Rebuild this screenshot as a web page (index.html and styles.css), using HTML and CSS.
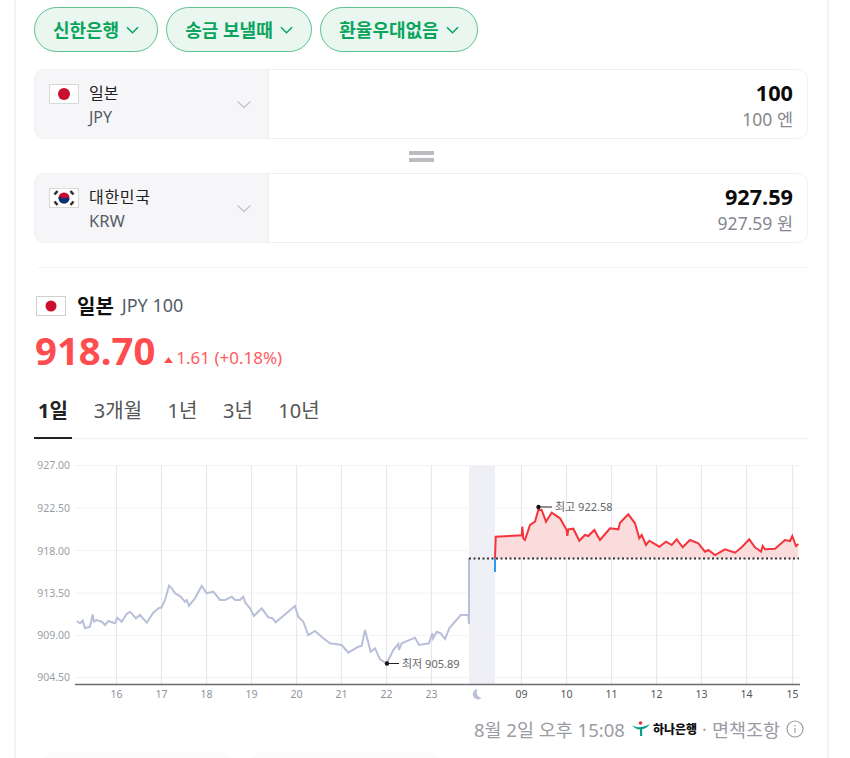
FILE: index.html
```html
<!DOCTYPE html>
<html lang="ko">
<head>
<meta charset="utf-8">
<title>환율</title>
<link rel="stylesheet" href="styles.css">
</head>
<body>
<main class="card">
  <div class="pills">
    <button class="pill pill-a">신한은행<svg class="pill-chev" viewBox="0 0 14 8"><path d="M1 1l6 6 6-6"/></svg></button>
    <button class="pill pill-b">송금 보낼때<svg class="pill-chev" viewBox="0 0 14 8"><path d="M1 1l6 6 6-6"/></svg></button>
    <button class="pill pill-c">환율우대없음<svg class="pill-chev" viewBox="0 0 14 8"><path d="M1 1l6 6 6-6"/></svg></button>
  </div>

  <section class="converter">
    <div class="cur-select">
      <svg class="flag" viewBox="0 0 30 20"><rect x=".5" y=".5" width="29" height="19" fill="#fff" stroke="#d9d9d9"/><circle cx="15" cy="10" r="6" fill="#c8102e"/></svg>
      <div class="cur-names"><span class="cur-name">일본</span><span class="cur-code">JPY</span></div>
      <svg class="cur-chev" viewBox="0 0 16 9"><path d="M1.500 1.500L8 7.500l6.500-6"/></svg>
    </div>
    <div class="cur-value"><strong>100</strong><span>100 엔</span></div>
  </section>

  <div class="swap"><i></i><i></i></div>

  <section class="converter">
    <div class="cur-select">
      <svg class="flag" viewBox="0 0 30 20">
        <rect x=".5" y=".5" width="29" height="19" fill="#fff" stroke="#d9d9d9"/>
        <circle cx="15" cy="10" r="5.500" fill="#c60c30"/>
        <path d="M9.600 9.200a5.500 5.500 0 0 0 10.800 2c-.6-1.600-2.400-2.300-3.900-1.300-1.600 1-2.900.8-3.800-.1-.9-.9-2.400-1.500-3.100-.6z" fill="#003478"/>
        <g stroke="#333" stroke-width="2.600">
          <path d="M5.500 6.500l3-3.500M21.500 3l3 3.500M5.500 13.500l3 3.500M21.500 17l3-3.500"/>
        </g>
      </svg>
      <div class="cur-names"><span class="cur-name cur-name-wide">대한민국</span><span class="cur-code cur-code-wide">KRW</span></div>
      <svg class="cur-chev" viewBox="0 0 16 9"><path d="M1.500 1.500L8 7.500l6.500-6"/></svg>
    </div>
    <div class="cur-value"><strong>927.59</strong><span>927.59 원</span></div>
  </section>

  <hr class="divider">

  <div class="title-row">
    <svg class="flag flag-title" viewBox="0 0 30 20"><rect x=".5" y=".5" width="29" height="19" fill="#fff" stroke="#d0d0d0"/><circle cx="15" cy="10" r="5.500" fill="#c8102e"/></svg>
    <strong class="title-name">일본</strong>
    <span class="title-code">JPY 100</span>
  </div>

  <div class="price-row">
    <span class="price">918.70</span>
    <span class="delta"><svg class="delta-tri" viewBox="0 0 10 7"><path d="M5 0l5 7H0z"/></svg>1.61 (+0.18%)</span>
  </div>

  <nav class="tabs">
    <a class="tab tab-on">1일</a>
    <a class="tab">3개월</a>
    <a class="tab">1년</a>
    <a class="tab">3년</a>
    <a class="tab">10년</a>
  </nav>

  <svg class="chart" viewBox="0 0 774 258" width="774" height="258">
    <g transform="translate(-34 -458)">
      <rect x="469" y="465" width="26" height="219" fill="#eef0f6"/>
      <g class="grid-h">
        <path d="M75 465.500H800M75 508H800M75 550.500H800M75 593H800M75 635.500H800M75 677.500H800"/>
      </g>
      <g class="grid-v">
        <path d="M116.500 465V684M161.500 465V684M206.500 465V684M251.500 465V684M296.500 465V684M341.500 465V684M386.500 465V684M431.500 465V684M521.500 465V684M566.500 465V684M611.500 465V684M656.500 465V684M701.500 465V684M746.500 465V684M792.500 465V684"/>
      </g>
      <path class="area" d="M495 558.500L495.700 536.700L521.700 535.300L522.300 526.700L523.300 538.300L525 540L530 525L535 521.700L538.300 510L541.700 510L546 521.700L551.700 512.700L560 518.300L566.700 530L567.300 536L568.300 529.300L573.300 528.700L579.300 540.700L585 535L588.300 536L594.300 530L600 540L610 528.300L618.300 529.300L620 522.700L628.300 514.300L635 523.300L639.300 538.300L641.700 535L646 545L649.300 540.700L659.300 546.700L666 541.700L671.700 545L676.700 539.300L682.700 547.300L690 540L698.300 543.300L705 551.700L708.300 550L715 555L725 549.300L735 552.700L741.700 547.300L749.300 539.300L755 547.300L761 551.700L762.700 546L765 549.300L775 548.700L785 540L790 541L792.300 536L796 546L798.300 544V558.500Z"/>
      <path class="line-past" d="M76.700 621L80 623.300L82.700 620.700L85 628.300L90 626.700L92.700 614.300L94 621.700L96.700 620L101.700 621.700L105 625L108.300 621L115 623.300L117.300 617.700L121.700 621.700L126.700 614L130 611.700L136 618.300L140 615L146.700 622.700L153.300 612.700L158.300 608.300L161.700 607.300L165 600L169 585.700L171.700 588.300L175 593.300L180 596L185 601.700L186.700 600L189 605.700L195 598.300L201.700 586L206.700 593.300L213.300 591.700L220 600L225 600L231.700 596.700L235 600L240 600L243.300 596.700L245 602.300L250 608.300L254 616L261.700 608.300L268.300 617.300L272.700 618.300L275.700 622.300L295 606L298.300 616.700L303.300 621.700L308.300 635L315 631L323.300 638.300L330 643.300L341.700 645L348.300 652.700L358.300 646.700L361.700 645.700L365 630L370.700 651.700L375 648.300L380 659.300L386.700 663.300L393.300 650L398.300 644L399 650L401.700 643.300L415 637.700L419 645L429 643.300L432.300 633.300L433 638.300L436.700 631.700L440.700 633.300L445 639L449.300 628.300L460.700 615L468.300 615L469 624L469 558"/>
      <path class="line-now" d="M495 558.500L495.700 536.700L521.700 535.300L522.300 526.700L523.300 538.300L525 540L530 525L535 521.700L538.300 510L541.700 510L546 521.700L551.700 512.700L560 518.300L566.700 530L567.300 536L568.300 529.300L573.300 528.700L579.300 540.700L585 535L588.300 536L594.300 530L600 540L610 528.300L618.300 529.300L620 522.700L628.300 514.300L635 523.300L639.300 538.300L641.700 535L646 545L649.300 540.700L659.300 546.700L666 541.700L671.700 545L676.700 539.300L682.700 547.300L690 540L698.300 543.300L705 551.700L708.300 550L715 555L725 549.300L735 552.700L741.700 547.300L749.300 539.300L755 547.300L761 551.700L762.700 546L765 549.300L775 548.700L785 540L790 541L792.300 536L796 546L798.300 544"/>
      <path class="line-blue" d="M495 558.500V572"/>
      <path class="baseline" d="M469 558.500H799"/>
      <path class="axis" d="M75 684.500H800"/>
      <g class="mark">
        <circle cx="538.500" cy="507" r="2.200"/><path d="M538.500 507H552"/>
        <circle cx="387" cy="663.500" r="2.200"/><path d="M387 663.500H399"/>
      </g>
      <g class="mark-text">
        <text x="555" y="511">최고 922.58</text>
        <text x="402" y="667.500">최저 905.89</text>
      </g>
      <g class="y-labels">
        <text x="70" y="469">927.00</text>
        <text x="70" y="512">922.50</text>
        <text x="70" y="554.500">918.00</text>
        <text x="70" y="597">913.50</text>
        <text x="70" y="639">909.00</text>
        <text x="70" y="681">904.50</text>
      </g>
      <g class="x-labels">
        <text x="116.500" y="698">16</text><text x="161.500" y="698">17</text><text x="206.500" y="698">18</text><text x="251.500" y="698">19</text><text x="296.500" y="698">20</text><text x="341.500" y="698">21</text><text x="386.500" y="698">22</text><text x="431.500" y="698">23</text>
        <text class="x-dark" x="521.500" y="698">09</text><text class="x-dark" x="566.500" y="698">10</text><text class="x-dark" x="611.500" y="698">11</text><text class="x-dark" x="656.500" y="698">12</text><text class="x-dark" x="701.500" y="698">13</text><text class="x-dark" x="746.500" y="698">14</text><text class="x-dark" x="792.500" y="698">15</text>
      </g>
      <path class="moon" d="M477.500 689a5.200 5.200 0 1 0 4 9a6 6 0 0 1-4-9z"/>
    </g>
  </svg>

  <footer class="source">
    <span class="stamp">8월 2일 오후 15:08</span>
    <span class="bank">
      <svg class="bank-mark" viewBox="0 0 18 16"><path d="M0 4c4 3 9 3 18-.8c-2.500 3-5.500 4.600-7.800 5V15H8V8.500C4.600 8.300 2 7 0 4z" fill="#0f9d8a"/><circle cx="8.500" cy="2" r="1.800" fill="#e0323c"/></svg>
      <b>하나은행</b>
    </span>
    <span class="dot">·</span>
    <span class="notice">면책조항</span>
    <svg class="info" viewBox="0 0 18 18"><circle cx="9" cy="9" r="8"/><path d="M9 8v5M9 5v1.500"/></svg>
  </footer>

  <div class="tiles"><i></i><i></i></div>
</main>
</body>
</html>
```

FILE: styles.css
```css
* { box-sizing: border-box; }
html, body { margin: 0; padding: 0; background: #fff; }
body {
  width: 850px;
  height: 758px;
  overflow: hidden;
  font-family: "Noto Sans", "Noto Sans CJK KR", sans-serif;
  color: #111;
}
.card {
  margin-left: 14px;
  width: 815px;
  height: 758px;
  overflow: hidden;
  border-left: 2px solid #f4f4f6;
  border-right: 2px solid #f4f4f6;
  padding: 7px 19px 0 18px;
}
.pills { display: flex; gap: 8px; }
.pill {
  height: 45px;
  border: 1.5px solid #5cc28f;
  border-radius: 23px;
  background: #e9f7f0;
  color: #0aa45c;
  font: 700 18px/1 "Noto Sans", "Noto Sans CJK KR", sans-serif;
  display: flex;
  align-items: center;
  justify-content: center;
  gap: 7px;
  padding: 0;
}
.pill-a { width: 124px; }
.pill-b { width: 146px; }
.pill-c { width: 158px; }
.pill-chev { width: 13px; height: 8px; fill: none; stroke: #0aa45c; stroke-width: 1.600; }

.converter {
  display: flex;
  height: 70px;
  margin-top: 17px;
  border: 1.5px solid #f0f0f2;
  border-radius: 10px;
  overflow: hidden;
}
.swap + .converter { margin-top: 11px; }
.cur-select {
  width: 234px;
  display: flex;
  align-items: flex-start;
  position: relative;
  padding: 12px 0 0 14px;
  background: #f6f6f8;
  border-right: 1px solid #eeeef0;
}
.flag { width: 30px; height: 20px; flex: none; margin-top: 2px; }
.cur-names { display: flex; flex-direction: column; margin: 1px 0 0 10px; }
.cur-name { font-size: 16px; line-height: 21px; color: #222; }
.cur-name-wide { letter-spacing: .7px; }
.cur-code { font-size: 16px; line-height: 26px; color: #555d68; }
.cur-code-wide { font-size: 16.500px; }
.cur-chev {
  position: absolute;
  left: 201px;
  top: 30px;
  width: 16px;
  height: 9px;
  fill: none;
  stroke: #c6c8cc;
  stroke-width: 1.500;
}
.cur-value {
  flex: 1;
  display: flex;
  flex-direction: column;
  align-items: flex-end;
  padding: 8px 14px 0 0;
}
.cur-value strong { font-size: 21.700px; line-height: 29px; font-weight: 700; color: #0b0b0b; }
.cur-value span { font-size: 17.500px; line-height: 24px; color: #85888f; }

.swap {
  display: flex;
  flex-direction: column;
  gap: 3px;
  align-items: center;
  margin: 12px 0 0 0;
}
.swap i { display: block; width: 25px; height: 4px; background: #bcbcc0; }

.divider {
  margin: 24px 0 0 4px;
  border: 0;
  border-top: 1.500px solid #f3f3f5;
}

.title-row { display: flex; align-items: center; height: 24px; margin-top: 25px; }
.flag-title { margin: 1px 0 0 2px; }
.title-name { margin-left: 11px; font-size: 20px; font-weight: 700; color: #111; }
.title-code { margin-left: 8px; font-size: 18px; color: #555d68; }

.price-row { display: flex; align-items: flex-start; height: 46px; margin-top: 10px; }
.price { font-size: 38.300px; font-weight: 700; line-height: 46px; color: #ff4d4f; margin-left: 1px; }
.delta { margin: 19px 0 0 9px; font-size: 17px; line-height: 24px; color: #ff5c60; display: inline-flex; align-items: center; }
.delta-tri { width: 9px; height: 6px; fill: #ff4d4f; margin: 3px 3px 0 0; }

.tabs {
  display: flex;
  height: 52px;
  margin-top: 14px;
  border-bottom: 1px solid #f1f1f3;
  gap: 25.500px;
  align-items: flex-start;
  padding-top: 9px;
}
.tab { font-size: 20px; line-height: 30px; color: #555; }
.tab-on { font-weight: 700; color: #222; padding: 0 4px; margin-right: -3.500px; height: 43px; border-bottom: 2px solid #222; }

.chart { display: block; margin-top: 19px; }
.grid-h path { stroke: #f3f3f6; stroke-width: 1; fill: none; }
.grid-v path { stroke: #e6e7ef; stroke-width: 1.200; fill: none; }
.area { fill: #fbdcdc; }
.line-past { fill: none; stroke: #b9bfd9; stroke-width: 2; }
.line-now { fill: none; stroke: #f5343c; stroke-width: 2; }
.line-blue { fill: none; stroke: #1a8cf0; stroke-width: 1.800; }
.baseline { fill: none; stroke: #333; stroke-width: 2; stroke-dasharray: 2 2.500; }
.axis { fill: none; stroke: #6b6b70; stroke-width: 1.500; }
.mark circle { fill: #111; }
.mark path { stroke: #222; stroke-width: 1; fill: none; }
.mark-text text { font-size: 11px; fill: #666; font-family: "Noto Sans", "Noto Sans CJK KR", sans-serif; }
.y-labels text { font-size: 10.500px; fill: #9c9ea8; text-anchor: end; font-family: "Noto Sans", sans-serif; }
.x-labels text { font-size: 10.500px; fill: #8f929c; text-anchor: middle; font-family: "Noto Sans", sans-serif; }
.x-labels .x-dark { fill: #555; }
.moon { fill: #b9bfd9; }

.source {
  display: flex;
  justify-content: flex-end;
  align-items: center;
  gap: 5px;
  height: 26px;
  padding-right: 4px;
  font-size: 18px;
  color: #9a9ca3;
}
.stamp { font-size: 18.500px; }
.notice { font-size: 18.500px; }
.bank { display: inline-flex; align-items: center; gap: 3px; margin-left: 2px; color: #111; }
.bank b { font-size: 12px; font-weight: 900; }
.bank-mark { width: 18px; height: 16px; }
.dot { color: #aaa; }
.info { width: 18px; height: 18px; fill: none; stroke: #9a9ca3; stroke-width: 1.200; margin-left: 1px; }

.tiles { display: flex; gap: 21px; margin: 10px 0 0 10px; }
.tiles i { display: block; width: 187px; height: 30px; background: #fbfbfb; border-radius: 10px; }
```
